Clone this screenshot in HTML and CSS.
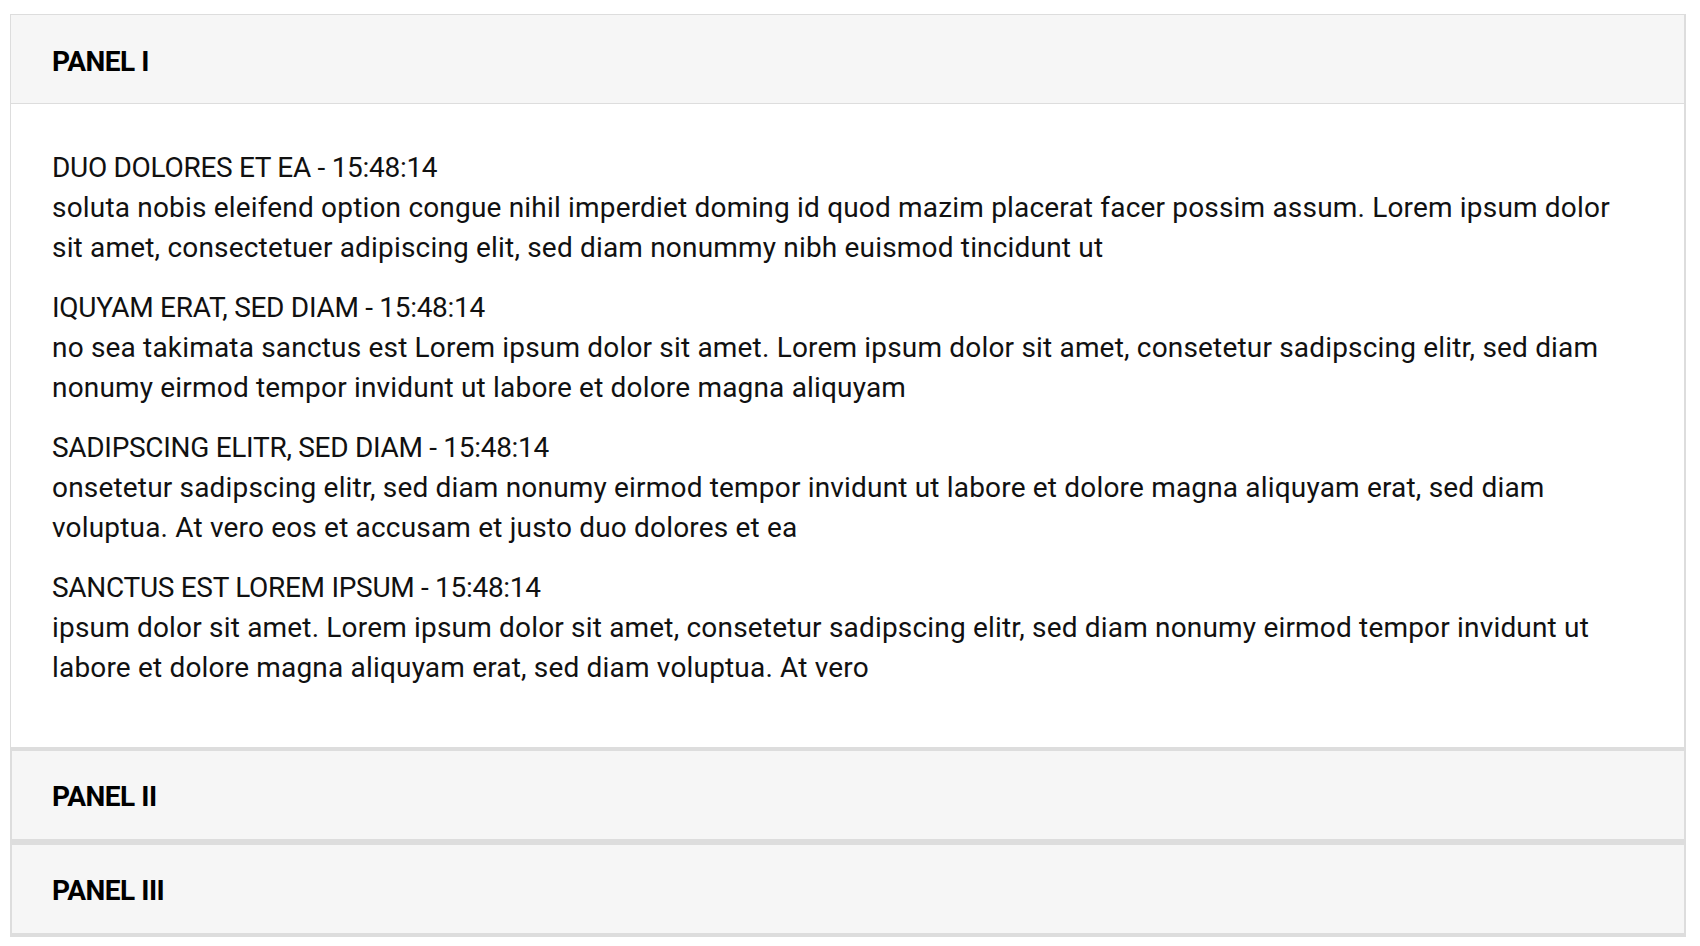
FILE: index.html
```html
<!DOCTYPE html>
<html lang="en">
<head>
<meta charset="utf-8">
<title>Panels</title>
<link rel="stylesheet" href="styles.css">
</head>
<body>
<div class="accordion">
  <section class="panel panel-open">
    <div class="panel-heading">PANEL I</div>
    <div class="panel-body">
      <div class="entry">
        <div class="entry-title">DUO DOLORES ET EA - 15:48:14</div>
        <p class="entry-text">soluta nobis eleifend option congue nihil imperdiet doming id quod mazim placerat facer possim assum. Lorem ipsum dolor sit amet, consectetuer adipiscing elit, sed diam nonummy nibh euismod tincidunt ut</p>
      </div>
      <div class="entry">
        <div class="entry-title">IQUYAM ERAT, SED DIAM - 15:48:14</div>
        <p class="entry-text">no sea takimata sanctus est Lorem ipsum dolor sit amet. Lorem ipsum dolor sit amet, consetetur sadipscing elitr, sed diam nonumy eirmod tempor invidunt ut labore et dolore magna aliquyam</p>
      </div>
      <div class="entry">
        <div class="entry-title">SADIPSCING ELITR, SED DIAM - 15:48:14</div>
        <p class="entry-text">onsetetur sadipscing elitr, sed diam nonumy eirmod tempor invidunt ut labore et dolore magna aliquyam erat, sed diam voluptua. At vero eos et accusam et justo duo dolores et ea</p>
      </div>
      <div class="entry">
        <div class="entry-title">SANCTUS EST LOREM IPSUM - 15:48:14</div>
        <p class="entry-text">ipsum dolor sit amet. Lorem ipsum dolor sit amet, consetetur sadipscing elitr, sed diam nonumy eirmod tempor invidunt ut labore et dolore magna aliquyam erat, sed diam voluptua. At vero</p>
      </div>
    </div>
  </section>
  <section class="panel panel-closed panel-mid">
    <div class="panel-heading">PANEL II</div>
  </section>
  <section class="panel panel-closed panel-last">
    <div class="panel-heading">PANEL III</div>
  </section>
</div>
</body>
</html>
```
FILE: styles.css
```css
html, body {
  margin: 0;
  padding: 0;
  background: #ffffff;
}

body {
  font-family: Roboto, "Liberation Sans", sans-serif;
  color: #111111;
}

.accordion {
  margin: 14px 14px 0 10px;
}

.panel {
  border-left: 2px solid #dddddd;
  border-right: 2px solid #dddddd;
}

.panel-open {
  border-top: 1px solid #dddddd;
  border-left-width: 1px;
  border-bottom: 4px solid #dddddd;
}

.panel-mid {
  border-bottom: 6px solid #dddddd;
}

.panel-last {
  border-bottom: 4px solid #dddddd;
}

.panel-heading {
  background: #f6f6f6;
  font-family: Roboto, "Liberation Sans", sans-serif;
  font-weight: 700;
  font-size: 28px;
  letter-spacing: -0.5px;
  line-height: 32px;
  color: #000000;
  padding: 31px 36px 25px 41px;
}

.panel-closed .panel-heading {
  padding: 30px 36px 26px 40px;
}

.panel-open .panel-heading {
  border-bottom: 1px solid #dddddd;
}

.panel-body {
  padding: 44px 59px 39px 41px;
  font-size: 28px;
  line-height: 40px;
  letter-spacing: 0.18px;
}

.entry {
  margin-bottom: 20px;
}

.entry-title {
  text-transform: uppercase;
  letter-spacing: -0.3px;
}

.entry-text {
  margin: 0;
}
```
